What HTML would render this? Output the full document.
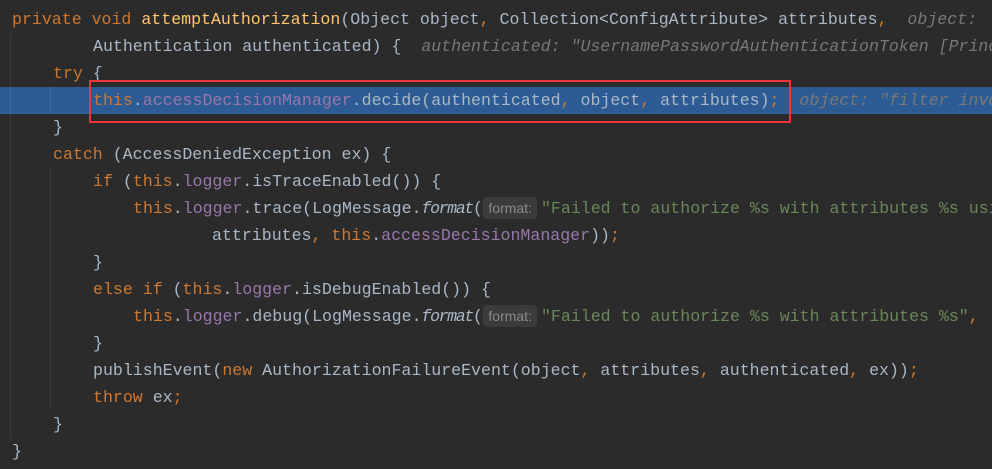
<!DOCTYPE html>
<html><head><meta charset="utf-8"><style>
html,body{margin:0;padding:0;background:#2b2b2b;width:992px;height:469px;overflow:hidden}
.l{position:absolute;right:0;overflow:hidden;height:27px;line-height:27px;white-space:pre;font-family:"Liberation Mono",monospace;font-size:16.58px;color:#a9b7c6}
.k{color:#cc7832}.m{color:#ffc66d}.f{color:#9876aa}.s{color:#6a8759}.i{font-style:italic}
.n{letter-spacing:-1.4px}
.h{color:#787878;font-style:italic}
.hb{display:inline-block;font-family:"Liberation Sans",sans-serif;font-size:14px;color:#8a8a8a;background:#3b3b3b;border-radius:4px;height:22px;line-height:22px;padding:0 5px;margin:0 4px 0 2px;vertical-align:middle;position:relative;top:-1px;letter-spacing:0}
.g{position:absolute;width:1px;background:#3a3a3a}
</style></head><body>
<div style="position:absolute;left:0;top:87px;width:992px;height:27px;background:#2d5b94"></div>
<div class="g" style="left:10px;top:33px;height:405px"></div>
<div class="g" style="left:50px;top:168px;height:243px"></div>
<div class="g" style="left:50px;top:87px;height:27px;background:#3f6aa0"></div>
<div class="g" style="left:10px;top:87px;height:27px;background:#3f6aa0"></div>
<div class="l" style="top:6px;left:12px"><span class="k">private void </span><span class="m">attemptAuthorization</span>(Object object<span class="k">, </span>Collection&lt;ConfigAttribute&gt; attributes<span class="k">,</span>  <span class="h">object: </span></div>
<div class="l" style="top:33px;left:93px">Authentication authenticated) {  <span class="h">authenticated: "UsernamePasswordAuthenticationToken [Principal</span></div>
<div class="l" style="top:60px;left:53px"><span class="k">try </span>{</div>
<div class="l" style="top:87px;left:93px"><span class="k">this</span>.<span class="f">accessDecisionManager</span>.decide(authenticated<span class="k">, </span>object<span class="k">, </span>attributes)<span class="k">;</span>  <span class="h">object: "filter invocation</span></div>
<div class="l" style="top:114px;left:53px">}</div>
<div class="l" style="top:141px;left:53px"><span class="k">catch </span>(AccessDeniedException ex) {</div>
<div class="l" style="top:168px;left:93px"><span class="k">if </span>(<span class="k">this</span>.<span class="f">logger</span>.isTraceEnabled()) {</div>
<div class="l" style="top:195px;left:133px"><span class="k">this</span>.<span class="f">logger</span>.trace(LogMessage.<span class="n"><span class="i">format</span>(</span><span class="hb">format:</span><span class="s">"Failed to authorize %s with attributes %s using</span></div>
<div class="l" style="top:222px;left:212px">attributes<span class="k">, this</span>.<span class="f">accessDecisionManager</span>))<span class="k">;</span></div>
<div class="l" style="top:249px;left:93px">}</div>
<div class="l" style="top:276px;left:93px"><span class="k">else if </span>(<span class="k">this</span>.<span class="f">logger</span>.isDebugEnabled()) {</div>
<div class="l" style="top:303px;left:133px"><span class="k">this</span>.<span class="f">logger</span>.debug(LogMessage.<span class="n"><span class="i">format</span>(</span><span class="hb">format:</span><span class="s">"Failed to authorize %s with attributes %s"</span><span class="k">,</span></div>
<div class="l" style="top:330px;left:93px">}</div>
<div class="l" style="top:357px;left:93px">publishEvent(<span class="k">new </span>AuthorizationFailureEvent(object<span class="k">, </span>attributes<span class="k">, </span>authenticated<span class="k">, </span>ex))<span class="k">;</span></div>
<div class="l" style="top:384px;left:93px"><span class="k">throw </span>ex<span class="k">;</span></div>
<div class="l" style="top:411px;left:53px">}</div>
<div class="l" style="top:438px;left:12px">}</div>
<div style="position:absolute;left:89px;top:80px;width:698px;height:39px;border:2px solid #f0353a"></div>
</body></html>
